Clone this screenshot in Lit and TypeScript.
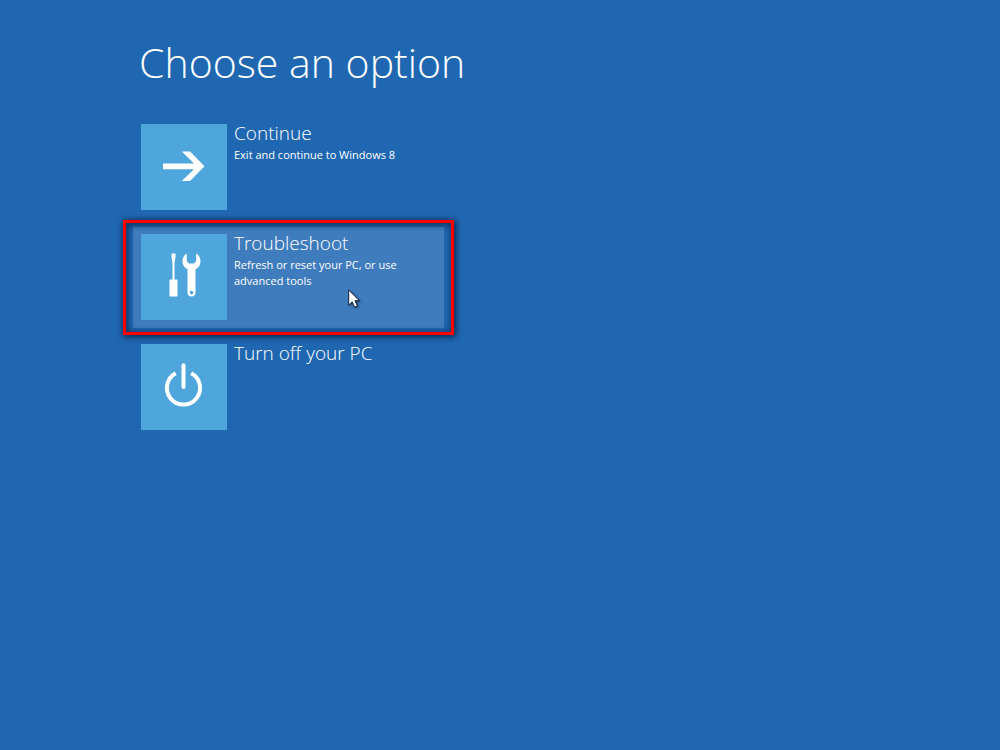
import { LitElement, html, svg, css, nothing } from "lit";
import { customElement, property } from "lit/decorators.js";

const icons = {
  arrow: svg`<path d="M22 39.4H53L40.8 27.6H49.1L63.5 42.3L49.1 57.1H40.8L53 45.3H22Z" fill="#fff" />`,
  tools: svg`
    <path d="M30.5 19.5H34.5V23.5L33.5 28.5V45.5H35.5C36.1 45.5 36.5 45.9 36.5 46.5V61.5C36.5 62.2 36.1 62.5 35.5 62.5H29.5C28.9 62.5 28.5 62.2 28.5 61.5V46.5C28.5 45.9 28.9 45.5 29.5 45.5H31.5V28.5L30.5 23.5Z" fill="#fff" />
    <path fill-rule="evenodd" d="M45.8 19.6C43.2 20.9 41.5 23.9 41.5 27.2C41.5 31 43.5 34 46.5 35.3V58.8C46.5 61 48.2 62.6 50.5 62.6C52.8 62.6 54.5 61 54.5 58.8V35.3C57.5 34 59.5 31 59.5 27.2C59.5 23.9 57.8 20.9 55.2 19.6V27L53 29.5H48L45.8 27ZM50.5 56.8A1.8 1.8 0 1 1 50.5 60.4A1.8 1.8 0 1 1 50.5 56.8Z" fill="#fff" />`,
  power: svg`
    <path d="M34.8 29.3A16.6 16.6 0 1 0 50.2 29.3" fill="none" stroke="#fff" stroke-width="4" />
    <path d="M42.5 21.3V43" fill="none" stroke="#fff" stroke-width="4" stroke-linecap="round" />`,
};

@customElement("boot-option")
class BootOption extends LitElement {
  @property() heading = "";
  @property() detail = "";
  @property() icon: keyof typeof icons = "arrow";
  @property({ type: Boolean, reflect: true }) active = false;

  static styles = css`
    :host {
      display: block;
      position: relative;
    }
    .option {
      display: flex;
      gap: 7px;
      align-items: flex-start;
      box-sizing: border-box;
      width: 100%;
      padding: 7px 8px 8px;
      border: 0;
      background: transparent;
      color: #fff;
      font-family: "Open Sans", "Noto Sans", sans-serif;
      text-align: left;
    }
    :host([active]) .option {
      background: #3f7cbd;
    }
    .tile {
      display: block;
      flex: none;
      width: 86px;
      height: 86px;
      background: #4ea6dd;
    }
    .text {
      display: flex;
      flex-direction: column;
      gap: 5px;
    }
    .heading {
      font-size: 19px;
      line-height: 18px;
      font-weight: 300;
    }
    .detail {
      font-size: 11px;
      line-height: 16px;
    }
    .frame {
      position: absolute;
      inset: -7px -10px;
      border: 3px solid #fe0000;
      box-shadow: 1px 1px 6px 1px rgba(0, 10, 30, 0.7), inset 1px 1px 6px 1px rgba(0, 10, 30, 0.6);
      pointer-events: none;
    }
    .cursor {
      position: absolute;
      left: 215px;
      top: 62px;
      filter: drop-shadow(1px 1px 1px rgba(0, 0, 0, 0.5));
      pointer-events: none;
    }
  `;

  render() {
    return html`
      <button class="option" type="button">
        <svg class="tile" viewBox="0 0 86 86" aria-hidden="true">${icons[this.icon]}</svg>
        <span class="text">
          <span class="heading">${this.heading}</span>
          ${this.detail ? html`<span class="detail">${this.detail}</span>` : nothing}
        </span>
      </button>
      ${this.active
        ? html`
            <div class="frame"></div>
            <svg class="cursor" width="14" height="20" viewBox="0 0 14 20" aria-hidden="true">
              <path d="M0.7 1V16L4.2 12.8L6.6 18.2L9.4 17L7 11.7H11.4Z" fill="#fff" stroke="#14233f" stroke-width="1" />
            </svg>
          `
        : nothing}
    `;
  }
}

@customElement("app-root")
class AppRoot extends LitElement {
  static styles = css`
    :host {
      display: block;
      box-sizing: border-box;
      min-height: 100vh;
      padding: 35px 20px 35px 141px;
      background: #2067b2;
      color: #fff;
      font-family: "Open Sans", "Noto Sans", sans-serif;
    }
    h1 {
      margin: 0 0 28px -2px;
      font-size: 41px;
      line-height: 54px;
      font-weight: 300;
    }
    .options {
      display: flex;
      flex-direction: column;
      gap: 9px;
      max-width: 311px;
      margin-left: -8px;
    }
  `;

  render() {
    return html`
      <main>
        <h1>Choose an option</h1>
        <div class="options">
          <boot-option icon="arrow" heading="Continue" detail="Exit and continue to Windows 8"></boot-option>
          <boot-option icon="tools" heading="Troubleshoot" detail="Refresh or reset your PC, or use advanced tools" active></boot-option>
          <boot-option icon="power" heading="Turn off your PC"></boot-option>
        </div>
      </main>
    `;
  }
}
